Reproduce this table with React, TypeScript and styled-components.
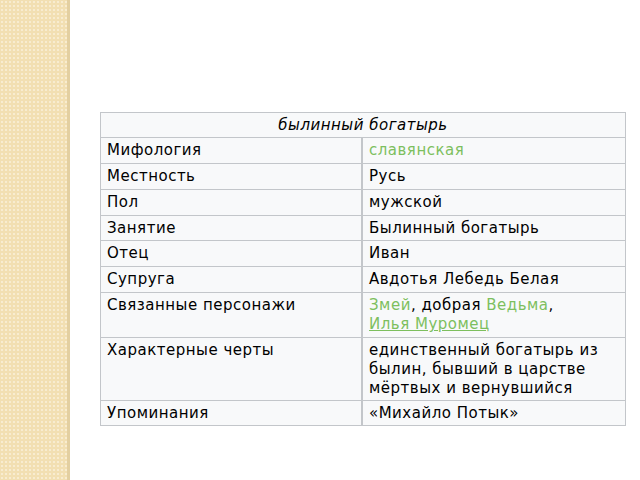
import styled, { createGlobalStyle } from "styled-components";

const GlobalStyle = createGlobalStyle`
  html, body {
    margin: 0;
    padding: 0;
    background: #ffffff;
  }
  body {
    font-family: "DejaVu Sans", "Liberation Sans", sans-serif;
  }
`;

const Slide = styled.div`
  width: 640px;
  height: 480px;
  display: flex;
  background: #ffffff;
  overflow: hidden;
`;

const Stripe = styled.div`
  width: 67px;
  flex: none;
  background-color: #f2dfb2;
  background-image: radial-gradient(#f8ecd0 1px, transparent 1.3px);
  background-size: 4px 4px;
  border-right: 3px solid #e3cfa0;
`;

const Content = styled.div`
  flex: 1;
  padding: 112px 0 0 30px;
`;

const Table = styled.table`
  width: 526px;
  border-collapse: collapse;
  background: #f8f9fa;
  border: 1px solid #c3c6ca;
  color: #000;
  font-size: 15px;
  letter-spacing: 0.5px;
`;

const Caption = styled.th`
  font-weight: normal;
  font-style: italic;
  text-align: center;
  height: 24px;
  padding: 0 6px;
  border: 1px solid #c3c6ca;
`;

const Label = styled.td<{ $tight?: boolean }>`
  width: 248px;
  vertical-align: top;
  padding: 3px 6px ${(p) => (p.$tight ? 2 : 3)}px;
  line-height: 19px;
  border: 1px solid #c3c6ca;
  border-right: 2px solid #c3c6ca;
`;

const Value = styled.td<{ $tight?: boolean }>`
  vertical-align: top;
  padding: 3px 6px ${(p) => (p.$tight ? 2 : 3)}px;
  line-height: 19px;
  border: 1px solid #c3c6ca;
`;

const Green = styled.span<{ $underline?: boolean }>`
  color: #7dbf5e;
  text-decoration: ${(p) => (p.$underline ? "underline" : "none")};
`;

const rows: [string, React.ReactNode, boolean?][] = [
  ["Мифология", <Green>славянская</Green>],
  ["Местность", "Русь"],
  ["Пол", "мужской"],
  ["Занятие", "Былинный богатырь", true],
  ["Отец", "Иван"],
  ["Супруга", "Авдотья Лебедь Белая"],
  [
    "Связанные персонажи",
    <>
      <Green>Змей</Green>, добрая <Green>Ведьма</Green>,
      <br />
      <Green $underline>Илья Муромец</Green>
    </>,
  ],
  [
    "Характерные черты",
    <>
      единственный богатырь из
      <br />
      былин, бывший в царстве
      <br />
      мёртвых и вернувшийся
    </>,
    true,
  ],
  ["Упоминания", "«Михайло Потык»", true],
];

export default function App() {
  return (
    <>
      <GlobalStyle />
      <Slide>
        <Stripe />
        <Content>
          <Table>
            <tbody>
              <tr>
                <Caption colSpan={2}>былинный богатырь</Caption>
              </tr>
              {rows.map(([label, value, tight]) => (
                <tr key={label}>
                  <Label $tight={tight}>{label}</Label>
                  <Value $tight={tight}>{value}</Value>
                </tr>
              ))}
            </tbody>
          </Table>
        </Content>
      </Slide>
    </>
  );
}
